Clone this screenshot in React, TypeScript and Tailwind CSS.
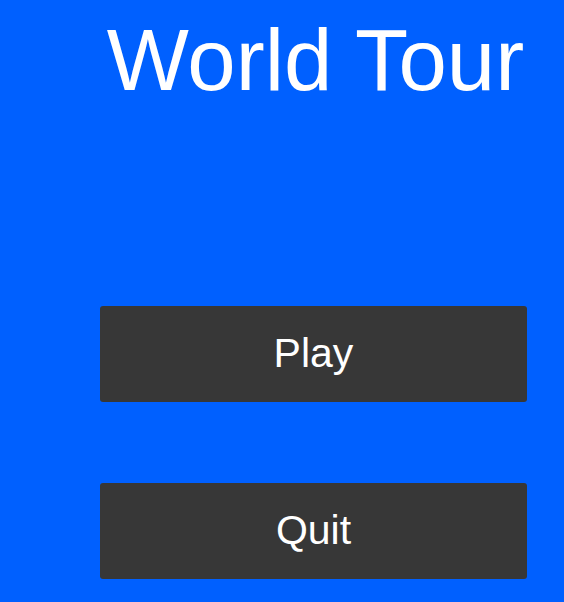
const buttons = ["Play", "Quit"];

export default function App() {
  return (
    <div className="h-[602px] w-[564px] overflow-hidden bg-[#0060ff]">
      <div className="ml-[100px] flex w-[427px] flex-col">
        {/* Title */}
        <h1 className="mt-[10px] h-[100px] whitespace-nowrap pl-[4px] text-center font-['Liberation_Sans',Arial,sans-serif] text-[87px] leading-[100px] text-white">
          World Tour
        </h1>

        {/* Menu buttons */}
        <div className="mt-[196px] flex flex-col gap-[81px]">
          {buttons.map((label) => (
            <button
              key={label}
              className="flex h-[96px] w-full items-center justify-center rounded-[3px] bg-[#373737] font-['Liberation_Sans',Arial,sans-serif] text-[41px] text-white"
            >
              {label}
            </button>
          ))}
        </div>
      </div>
    </div>
  );
}
